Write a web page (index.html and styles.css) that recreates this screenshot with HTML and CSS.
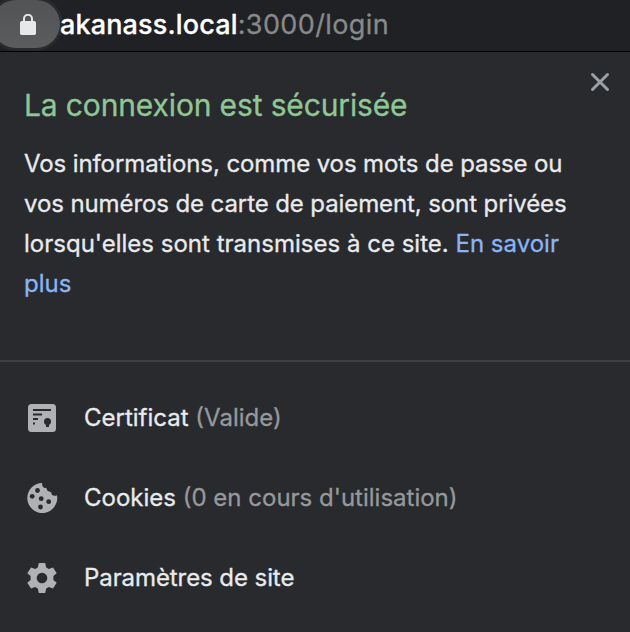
FILE: index.html
```html
<!DOCTYPE html>
<html lang="fr">
<head>
<meta charset="utf-8">
<title>La connexion est sécurisée</title>
<link rel="stylesheet" href="styles.css">
</head>
<body>
<header class="bar">
  <span class="lock">
    <svg width="16" height="21" viewBox="0 0 16 21"><path d="M4 8V4.8a4 4 0 0 1 8 0V8" fill="none" stroke="#e8e8e8" stroke-width="2"/><rect y="7" width="16" height="14" rx="1.8" fill="#e8e8e8"/></svg>
  </span>
  <span class="url"><span class="host">akanass.local</span><span class="path">:3000/login</span></span>
</header>
<main class="popup">
  <section class="summary">
    <button class="close" aria-label="Fermer">
      <svg width="20" height="20" viewBox="0 0 20 20"><path d="M2.500 2.500l15 15M17.500 2.500l-15 15" stroke="#9aa0a4" stroke-width="3" stroke-linecap="round"/></svg>
    </button>
    <h1 class="title">La connexion est sécurisée</h1>
    <p class="text"><span class="tight">Vos informations, comme vos mots de passe ou</span><br><span class="tight">vos numéros de carte de paiement, sont privées</span><br>lorsqu'elles sont transmises à ce site. <a class="link">En savoir</a><br><a class="link">plus</a></p>
  </section>
  <ul class="list">
    <li class="row">
      <svg class="icon" width="32" height="32" viewBox="0 0 32 32"><rect x="2" y="2" width="28" height="28" rx="3.5" fill="#afb1b4"/><path d="M7 8h18M7 12.500h9M7 17h5M7 21.500h2" stroke="#292a2d" stroke-width="2.2"/><circle cx="21.500" cy="19.500" r="3.500" fill="#292a2d"/><path d="M20 21h3v4h-3z" fill="#292a2d"/></svg>
      <span class="label">Certificat <span class="note">(Valide)</span></span>
    </li>
    <li class="row">
      <svg class="icon" width="32" height="32" viewBox="0 0 32 32"><path d="M16.200 1A15 15 0 1 0 31 13.200q-2.700 1.200-5.200-.4.200-2.800-2.300-3.200-2.300.2-2.800-2.600-.4-1.600-2.600-1-2.600-1.600-1.900-5z" fill="#afb1b4"/><g fill="#292a2d"><circle cx="11.500" cy="8.500" r="2.400"/><circle cx="6.200" cy="14.300" r="2.400"/><circle cx="15.200" cy="16.700" r="2.400"/><circle cx="22.700" cy="19.700" r="2.400"/><circle cx="14.500" cy="25" r="2.400"/></g></svg>
      <span class="label">Cookies <span class="note">(0 en cours d'utilisation)</span></span>
    </li>
    <li class="row">
      <svg class="icon" width="32" height="32" viewBox="0 0 32 32"><path d="M12.800 1h6.400l1 4.400 2.600 1.500 4.200-1.400 3.700 5.700-3.300 2.900v3.800l3.300 2.900-3.700 5.700-4.200-1.400-2.600 1.500-1 4.400h-6.400l-1-4.400-2.600-1.500L5 26.500 1.300 20.800 4.600 17.900v-3.800L1.300 11.200 5 5.500l4.200 1.400 2.600-1.500zM16 10.700a5.300 5.300 0 1 0 0 10.600a5.300 5.300 0 1 0 0-10.600z" fill="#afb1b4" fill-rule="evenodd"/></svg>
      <span class="label settings">Paramètres de site</span>
    </li>
  </ul>
</main>
</body>
</html>
```
FILE: styles.css
```css
* { box-sizing: border-box; }
body {
  margin: 0;
  width: 630px;
  height: 632px;
  overflow: hidden;
  background: #292a2d;
  color: #e8eaed;
  font-family: Inter, "Liberation Sans", sans-serif;
  -webkit-text-stroke: 0.3px currentColor;
}
.bar {
  display: flex;
  align-items: flex-start;
  height: 52px;
  background: #202124;
  border-bottom: 1px solid #000;
}
.lock {
  flex: none;
  display: flex;
  width: 68px;
  height: 48px;
  margin-left: -8px;
  padding: 14px 0 0 28px;
  border-radius: 24px;
  background: linear-gradient(#525354, #5b5c5d);
  box-shadow: 0 0 0 3px #292a2c;
}
.url { font-size: 27px; line-height: 50px; white-space: nowrap; }
.host { color: #fff; font-weight: 500; letter-spacing: 0.15px; }
.path { color: #87898b; letter-spacing: 0.4px; }
.summary {
  position: relative;
  height: 310px;
  padding: 33px 24px 0;
  border-bottom: 2px solid #3f4043;
}
.close {
  position: absolute;
  top: 20px;
  right: 20px;
  display: flex;
  padding: 0;
  border: 0;
  background: none;
}
.title {
  margin: 0;
  font-size: 30px;
  line-height: 40px;
  font-weight: 400;
  letter-spacing: -0.14px;
  color: #8ec795;
  white-space: nowrap;
}
.text {
  margin: 19px 0 0;
  font-size: 24px;
  line-height: 40px;
  letter-spacing: 0.01px;
  white-space: nowrap;
}
.tight { letter-spacing: -0.1px; }
.link { color: #8ab4f8; }
.list { list-style: none; margin: 0; padding: 16px 26px; }
.row { display: flex; align-items: center; gap: 26px; height: 80px; }
.icon { flex: none; }
.label { font-size: 24px; line-height: 40px; white-space: nowrap; }
.settings { letter-spacing: -0.08px; }
.note { color: #96999c; }
```
